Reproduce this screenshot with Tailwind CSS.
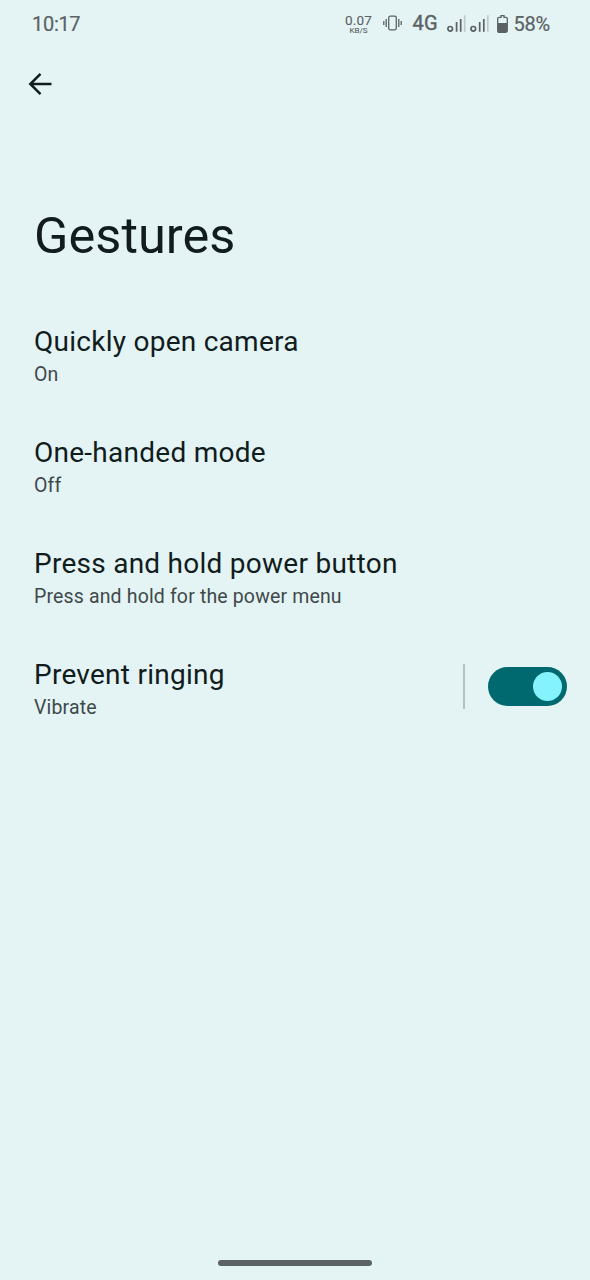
<!DOCTYPE html>
<html lang="en"><head><meta charset="utf-8"><title>Gestures</title>
<script src="https://cdn.jsdelivr.net/npm/@tailwindcss/browser@4"></script></head>
<body class="bg-[#e4f3f4]">
<div class="w-[590px] h-[1280px] flex flex-col bg-[#e4f3f4] font-['Roboto',sans-serif] text-[#111c1d] overflow-hidden">
<header class="h-12 shrink-0 flex items-center pl-8 pr-10 text-[#5b6263]">
<span class="text-[20px] leading-6 tracking-[-0.3px] [-webkit-text-stroke:0.2px_currentColor]">10:17</span>
<div class="ml-auto flex items-center">
<div class="w-7 flex flex-col items-center mr-[10.5px] [-webkit-text-stroke:0.1px_currentColor]"><span class="text-[13.5px] leading-[13px] tracking-[0.2px]">0.07</span><span class="text-[8px] leading-[8px]">KB/S</span></div>
<svg class="mr-[10.5px] -mt-[3px]" width="19" height="16" viewBox="0 0 19 16" fill="none" stroke="currentColor" stroke-width="1.3"><rect x="5.7" y="1.2" width="7.6" height="13.6" rx="1.5"/><path d="M3.2 4v8M.8 6v4M15.8 4v8M18.2 6v4"/></svg>
<span class="text-[20px] leading-6 tracking-[0.3px] mr-[9.5px] -mt-[2px] [-webkit-text-stroke:0.4px_currentColor]">4G</span>
<svg class="mr-2" width="42" height="18" viewBox="0 0 42 18" fill="none" stroke="currentColor" stroke-width="1.7"><circle cx="3.2" cy="13.8" r="2.3"/><path d="M9.6 7v9.8M13.7 4v12.8"/><circle cx="26.3" cy="13.8" r="2.3"/><path d="M32.7 7v9.8M36.8 4v12.8"/><path d="M17.7 .2v16.6M40.8 .2v16.6" stroke="#bdc8c9"/></svg>
<svg class="mr-[5px] -mt-[1px]" width="11" height="18" viewBox="0 0 11 18"><path fill="none" stroke="currentColor" stroke-width="1.3" d="M4 .7h3v1.6h1.8q1.5 0 1.5 1.5v12q0 1.5-1.5 1.5H2.2q-1.5 0-1.5-1.5v-12q0-1.5 1.5-1.5H4z"/><path fill="currentColor" d="M1 8h9v9H1z"/></svg>
<span class="text-[20px] leading-6 tracking-[-0.2px] [-webkit-text-stroke:0.2px_currentColor]">58%</span></div>
</header>
<nav class="h-[72px] shrink-0 pl-7 flex items-center"><svg width="24" height="24" viewBox="0 0 24 24" fill="none" stroke="currentColor" stroke-width="2.5"><path d="M12.5 1.8L2.3 12l10.2 10.2M2.3 12H23.5"/></svg></nav>
<h1 class="mt-[84px] pl-[34px] text-[50.5px] leading-[64px] tracking-[0.05px]">Gestures</h1>
<main class="mt-[58px] flex flex-col pl-[34px] pr-[23px]">
<section class="h-[111px]"><h2 class="text-[28px] leading-8 tracking-[0.26px]">Quickly open camera</h2><p class="mt-px text-[19.5px] leading-8 tracking-[0.15px] text-[#3f494a]">On</p></section>
<section class="h-[111px]"><h2 class="text-[28px] leading-8 tracking-[0.26px]">One-handed mode</h2><p class="mt-px text-[19.5px] leading-8 tracking-[0.15px] text-[#3f494a]">Off</p></section>
<section class="h-[111px]"><h2 class="text-[28px] leading-8 tracking-[0.26px]">Press and hold power button</h2><p class="mt-px text-[19.5px] leading-8 tracking-[0.15px] text-[#3f494a]">Press and hold for the power menu</p></section>
<section class="flex"><div class="flex-1"><h2 class="text-[28px] leading-8 tracking-[0.26px]">Prevent ringing</h2><p class="mt-px text-[19.5px] leading-8 tracking-[0.15px] text-[#3f494a]">Vibrate</p></div><div class="mt-[5px] mr-[23px] h-[45px] w-[2px] bg-[#b5c1c2]"></div><div class="mt-[8px] w-[79px] h-[39px] rounded-full bg-[#006970] flex items-center justify-end pr-[5px]"><div class="size-[29px] rounded-full bg-[#84f3fd]"></div></div></section>
</main>
<footer class="mt-auto mb-[14px] ml-[218px] h-[6px] w-[154px] rounded-full bg-[#5b6263]"></footer>
</div></body></html>
